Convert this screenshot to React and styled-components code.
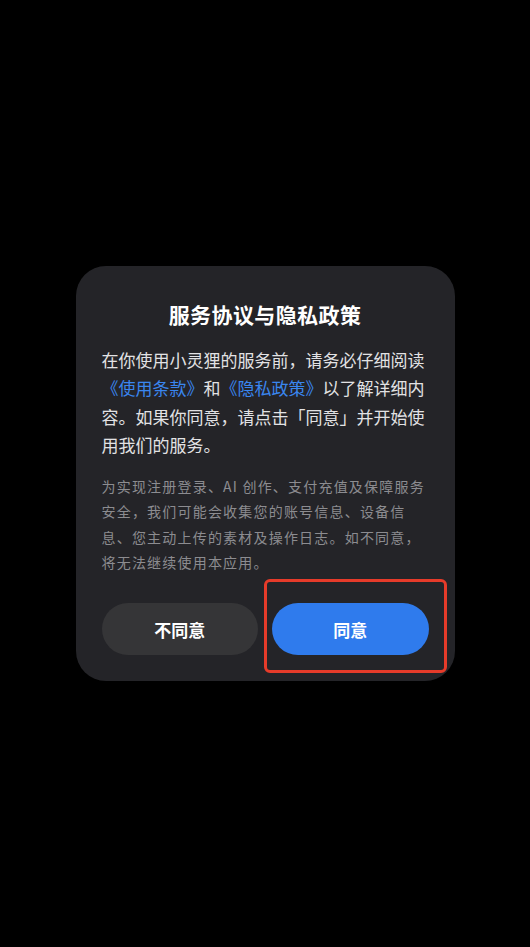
import React from "react";
import styled, { createGlobalStyle } from "styled-components";

const GlobalStyle = createGlobalStyle`
  html, body {
    margin: 0;
    padding: 0;
    background: #000;
  }
  body {
    font-family: "Noto Sans CJK SC", "Noto Sans", sans-serif;
  }
`;

const Screen = styled.div`
  width: 530px;
  height: 947px;
  background: #000;
  display: flex;
  align-items: center;
  justify-content: center;
  box-sizing: border-box;
`;

const Dialog = styled.div`
  width: 379px;
  box-sizing: border-box;
  background: #242428;
  border-radius: 30px;
  padding: 33px 26px 26px;
  display: flex;
  flex-direction: column;
`;

const Title = styled.h2`
  margin: 0 0 17px;
  text-align: center;
  color: #fff;
  font-size: 21px;
  font-weight: 700;
  line-height: 30px;
  letter-spacing: 0.4px;
`;

const Body = styled.p`
  margin: 0 0 14px;
  color: #e2e2e4;
  font-size: 17px;
  line-height: 28.5px;
`;

const Link = styled.span`
  color: #3a86ef;
`;

const Note = styled.p`
  margin: 0;
  color: #8c8c90;
  font-size: 14px;
  line-height: 25.3px;
  letter-spacing: 1.2px;
`;

const Actions = styled.div`
  display: flex;
  gap: 14px;
  margin-top: 28px;
`;

const Slot = styled.div`
  position: relative;
  flex: 1;
  display: flex;
`;

const Button = styled.button`
  flex: 1;
  height: 52px;
  border: none;
  border-radius: 26px;
  background: ${({ $primary }) => ($primary ? "#2f7bed" : "#353537")};
  color: #fff;
  font-family: inherit;
  font-size: 17px;
  font-weight: 700;
  cursor: pointer;
`;

const Highlight = styled.div`
  position: absolute;
  left: -8px;
  right: -18px;
  top: -24px;
  bottom: -18px;
  border: 3px solid #e63b2a;
  border-radius: 6px;
  pointer-events: none;
`;

export default function App() {
  return (
    <>
      <GlobalStyle />
      <Screen>
        <Dialog>
          <Title>服务协议与隐私政策</Title>
          <Body>
            在你使用小灵狸的服务前，请务必仔细阅读
            <Link>《使用条款》</Link>和<Link>《隐私政策》</Link>
            以了解详细内容。如果你同意，请点击「同意」并开始使用我们的服务。
          </Body>
          <Note>
            为实现注册登录、AI 创作、支付充值及保障服务安全，我们可能会收集您的账号信息、设备信息、您主动上传的素材及操作日志。如不同意，将无法继续使用本应用。
          </Note>
          <Actions>
            <Slot>
              <Button>不同意</Button>
            </Slot>
            <Slot>
              <Button $primary>同意</Button>
              <Highlight />
            </Slot>
          </Actions>
        </Dialog>
      </Screen>
    </>
  );
}
